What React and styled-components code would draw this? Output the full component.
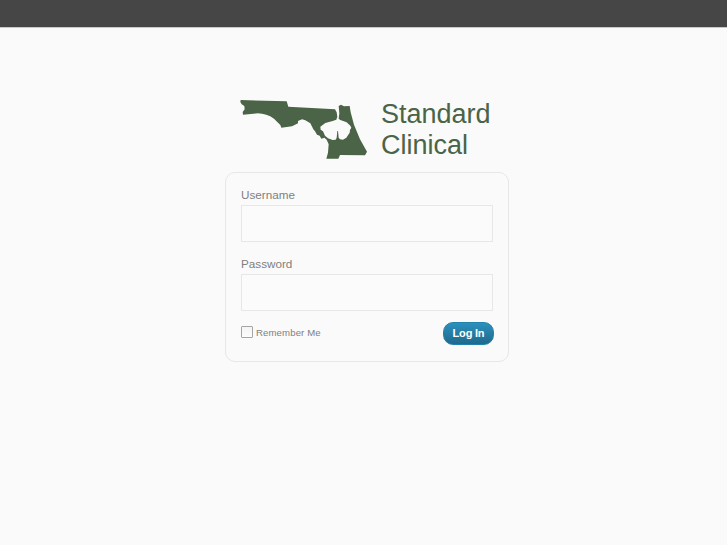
import React from "react";
import styled, { createGlobalStyle } from "styled-components";

const GlobalStyle = createGlobalStyle`
  * {
    box-sizing: border-box;
  }

  body {
    margin: 0;
    background: #fafafa;
    font-family: "Liberation Sans", Arial, sans-serif;
  }
`;

const PageContainer = styled.div`
  display: flex;
  flex-direction: column;
  height: 545px;
  overflow: hidden;
`;

const TopBar = styled.header`
  flex: none;
  height: 28px;
  background: #464646;
  border-bottom: 1px solid #c8c8c8;
`;

const LoginContainer = styled.main`
  width: 284px;
  margin: 71px 0 0 225px;
`;

const LogoLink = styled.h1`
  display: flex;
  height: 73px;
  margin: 0;
  padding-left: 15px;
  color: #4b6346;
`;

const LogoMap = styled.svg`
  flex: none;
  width: 127px;
  height: 60px;
  fill: currentColor;
`;

const LogoName = styled.span`
  margin-left: 14px;
  font-size: 27px;
  font-weight: 400;
  line-height: 31px;
`;

const LoginForm = styled.form`
  height: 190px;
  padding: 15px 15px 0;
  border: 1px solid #e7e7e7;
  border-radius: 10px;
`;

const Field = styled.label`
  display: block;
  height: 69px;
  color: #808080;
  font-size: 11.7px;
  line-height: 14px;
`;

const Input = styled.input`
  display: block;
  width: 252px;
  height: 37px;
  margin-top: 3px;
  padding: 3px;
  border: 1px solid #e7e7e7;
  background: #fbfbfb;
  outline: none;
  font-size: 22px;
`;

const FormFooter = styled.div`
  display: flex;
  justify-content: space-between;
  align-items: flex-start;
  width: 253px;
  margin-top: -4px;
`;

const RememberMe = styled.label`
  display: flex;
  align-items: flex-start;
  gap: 3px;
  padding-top: 4px;
  color: #808080;
  font-size: 9.6px;
  letter-spacing: 0.12px;
  line-height: 13px;
`;

const Checkbox = styled.input`
  appearance: none;
  width: 12px;
  height: 12px;
  margin: 0;
  border: 1px solid #a5a5a5;
  border-radius: 1px;
  background: linear-gradient(#f4f4f4, #fcfcfc);
`;

const LoginButton = styled.button`
  width: 51px;
  height: 23px;
  padding: 0 0 1px;
  border: 1px solid #2382ab;
  border-radius: 10px;
  background: linear-gradient(#2a91bd, #20698c);
  color: #fff;
  font-family: inherit;
  font-size: 11px;
  font-weight: 700;
  letter-spacing: -0.2px;
  line-height: 20px;
`;

export default class App extends React.Component {
  state = {
    username: "",
    password: "",
    remember: false,
  };

  onChangeUsername = (event) => {
    this.setState({ username: event.target.value });
  };

  onChangePassword = (event) => {
    this.setState({ password: event.target.value });
  };

  onChangeRemember = (event) => {
    this.setState({ remember: event.target.checked });
  };

  render() {
    return (
      <PageContainer>
        <GlobalStyle />
        <TopBar />
        <LoginContainer>
          <LogoLink>
            <LogoMap viewBox="24 21 381 180" preserveAspectRatio="none">
              <path
                fillRule="evenodd"
                d="M26 24L164 28L169 44L309 52L314 61L316 74L313 83L302 87L280 93L265 104L266 113L273 118L279 131L288 139L302 144L311 143L314 137L316 117L318 117L320 137L324 142L333 143L343 137L353 122L354 114L358 107L355 101L344 91L325 84L320 80L322 64L320 42L327 38L336 43L353 42L356 61L366 98L384 142L405 179L399 190L324 189L319 200L283 200L288 182L290 157L284 143L277 137L268 140L263 131L255 128L249 118L244 112L235 94L220 85L210 82L198 87L198 94L180 103L148 107L145 99L126 80Q104 65 77 64L33 68L32 60L38 52L37 42L29 37L25 30Z"
              />
            </LogoMap>
            <LogoName>
              Standard
              <br />
              Clinical
            </LogoName>
          </LogoLink>
          <LoginForm onSubmit={(event) => event.preventDefault()}>
            <Field>
              Username
              <Input
                type="text"
                value={this.state.username}
                onChange={this.onChangeUsername}
              />
            </Field>
            <Field>
              Password
              <Input
                type="password"
                value={this.state.password}
                onChange={this.onChangePassword}
              />
            </Field>
            <FormFooter>
              <RememberMe>
                <Checkbox
                  type="checkbox"
                  checked={this.state.remember}
                  onChange={this.onChangeRemember}
                />
                Remember Me
              </RememberMe>
              <LoginButton type="submit">Log In</LoginButton>
            </FormFooter>
          </LoginForm>
        </LoginContainer>
      </PageContainer>
    );
  }
}
